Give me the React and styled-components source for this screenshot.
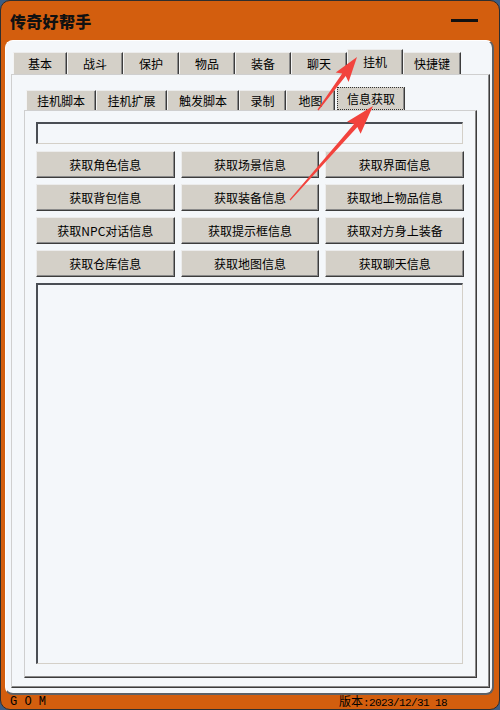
import styled, { createGlobalStyle } from 'styled-components'

const GlobalStyle = createGlobalStyle`
  html, body {
    margin: 0;
    padding: 0;
    background: #3c5e86;
    width: 500px;
    height: 710px;
    overflow: hidden;
  }
  * { box-sizing: border-box; }
`

const Window = styled.div`
  position: relative;
  width: 500px;
  height: 710px;
  background: #d35e0e;
  border: 1px solid #2e2e2e;
  border-radius: 10px;
  display: flex;
  flex-direction: column;
  font-family: "Noto Sans CJK SC", "Liberation Sans", sans-serif;
  color: #000;
`

const TitleBar = styled.div`
  height: 39px;
  flex: none;
  display: flex;
  align-items: center;
  justify-content: space-between;
  padding: 0 21px 0 9px;
`

const Title = styled.div`
  font-size: 16px;
  font-weight: 900;
  color: #111;
  letter-spacing: 0.3px;
`

const Minimize = styled.div`
  width: 27px;
  height: 3px;
  background: #111;
`

const Client = styled.div`
  flex: 1;
  margin: 0 5px 0 4px;
  background: #f4f7fa;
  border-radius: 8px;
  border-top: 1px solid #ffffff;
  border-left: 1px solid #ffffff;
  border-right: 2px solid #5c6066;
  border-bottom: 2px solid #5c6066;
  padding: 8px 2px 5px 5px;
  display: flex;
  flex-direction: column;
`

const TabControl = styled.div`
  flex: 1;
  display: flex;
  flex-direction: column;
`

const TabStrip = styled.div`
  display: flex;
  align-items: flex-end;
  height: ${p => p.$h}px;
  padding-left: 2px;
`

const Tab = styled.div`
  width: ${p => p.$w}px;
  height: ${p => (p.$active ? p.$h + 3 : p.$h)}px;
  margin-left: ${p => p.$ml || 0}px;
  background: #d4d0c8;
  border-top: 1px solid #ececec;
  border-left: 1px solid #f4f4f4;
  border-right: 1px solid #3c3c3c;
  box-shadow: inset -1px 0 #8a8a8a;
  display: flex;
  align-items: center;
  justify-content: center;
  font-size: 12px;
  line-height: 1;
  padding-top: ${p => (p.$active ? 0 : 1)}px;
  ${p => p.$focus && `
    border: 1px dotted #333;
    border-right: 1px solid #3c3c3c;
  `}
`

const TabPanel = styled.div`
  flex: 1;
  display: flex;
  flex-direction: column;
  border-top: 1px solid #cfcfcf;
  border-left: 1px solid #cfcfcf;
  border-right: 1px solid #3c3c3c;
  border-bottom: 1px solid #3c3c3c;
  box-shadow: inset -1px -1px #8a8a8a;
  padding: ${p => p.$pad};
`

const TextBox = styled.div`
  height: 22px;
  flex: none;
  background: #f4f7fa;
  border-top: 2px solid #4a4e54;
  border-left: 2px solid #4a4e54;
  border-right: 1px solid #d4d0c8;
  border-bottom: 1px solid #d4d0c8;
  margin-right: 1px;
`

const ButtonGrid = styled.div`
  display: grid;
  grid-template-columns: repeat(3, 1fr);
  grid-auto-rows: 27px;
  column-gap: 6px;
  row-gap: 6px;
  margin-top: 7px;
`

const Button = styled.div`
  background: #d4d0c8;
  border-top: 1px solid #ececec;
  border-left: 1px solid #ececec;
  border-right: 1px solid #3c3c3c;
  border-bottom: 1px solid #3c3c3c;
  box-shadow: inset -1px -1px #8a8a8a;
  display: flex;
  align-items: center;
  justify-content: center;
  font-size: 12px;
  line-height: 1;
`

const OutputArea = styled.div`
  flex: 1;
  margin-top: 6px;
  margin-right: 1px;
  background: #f4f7fa;
  border-top: 2px solid #4a4e54;
  border-left: 2px solid #4a4e54;
  border-right: 1px solid #d4d0c8;
  border-bottom: 1px solid #d4d0c8;
`

const StatusBar = styled.div`
  height: 14px;
  flex: none;
  display: flex;
  align-items: center;
  justify-content: space-between;
  padding: 0 52px 0 9px;
  line-height: 1;
`

const Gom = styled.span`
  font-family: "Liberation Mono", "DejaVu Sans Mono", monospace;
  font-size: 12px;
  letter-spacing: 0;
`

const Version = styled.span`
  font-family: "Liberation Mono", monospace;
  font-size: 11px;
  letter-spacing: -0.6px;
`

const VersionLabel = styled.span`
  font-family: "Noto Sans CJK SC", sans-serif;
  font-size: 12px;
  letter-spacing: 0;
`

const Overlay = styled.svg`
  position: absolute;
  top: -1px;
  left: -1px;
  pointer-events: none;
`

const mainTabs = [
  ['基本', 54], ['战斗', 56], ['保护', 56], ['物品', 56],
  ['装备', 56], ['聊天', 56], ['挂机', 56, true], ['快捷键', 58],
]

const subTabs = [
  ['挂机脚本', 70], ['挂机扩展', 71], ['触发脚本', 72],
  ['录制', 47], ['地图', 49], ['信息获取', 68, true],
]

const buttons = [
  '获取角色信息', '获取场景信息', '获取界面信息',
  '获取背包信息', '获取装备信息', '获取地上物品信息',
  '获取NPC对话信息', '获取提示框信息', '获取对方身上装备',
  '获取仓库信息', '获取地图信息', '获取聊天信息',
]

// tapered arrow from tail to tip
function arrowPoints(tx, ty, px, py, headLen, headHalf) {
  const dx = px - tx, dy = py - ty
  const len = Math.hypot(dx, dy)
  const ux = dx / len, uy = dy / len
  const nx = -uy, ny = ux
  const bx = px - headLen * ux, by = py - headLen * uy
  const pts = [
    [tx - 0.6 * nx, ty - 0.6 * ny],
    [bx - 2.2 * nx, by - 2.2 * ny],
    [bx - headHalf * nx - 3 * ux, by - headHalf * ny - 3 * uy],
    [px, py],
    [bx + headHalf * nx - 3 * ux, by + headHalf * ny - 3 * uy],
    [bx + 2.2 * nx, by + 2.2 * ny],
    [tx + 0.6 * nx, ty + 0.6 * ny],
  ]
  return pts.map(p => p.map(v => v.toFixed(1)).join(',')).join(' ')
}

export default function App() {
  return (
    <>
      <GlobalStyle />
      <Window>
        <TitleBar>
          <Title>传奇好帮手</Title>
          <Minimize />
        </TitleBar>
        <Client>
          <TabControl>
            <TabStrip $h={25}>
              {mainTabs.map(([t, w, a]) => (
                <Tab key={t} $w={w} $h={22} $active={a}>{t}</Tab>
              ))}
            </TabStrip>
            <TabPanel $pad="12px 12px 9px 12px">
              <TabControl>
                <TabStrip $h={23}>
                  {subTabs.map(([t, w, a]) => (
                    <Tab key={t} $w={w} $h={20} $active={a} $focus={a} $ml={a ? 2 : 0}>{t}</Tab>
                  ))}
                </TabStrip>
                <TabPanel $pad="11px 12px 13px 11px">
                  <TextBox />
                  <ButtonGrid>
                    {buttons.map(b => <Button key={b}>{b}</Button>)}
                  </ButtonGrid>
                  <OutputArea />
                </TabPanel>
              </TabControl>
            </TabPanel>
          </TabControl>
        </Client>
        <StatusBar>
          <Gom>G O M</Gom>
          <Version><VersionLabel>版本</VersionLabel>:2023/12/31 18</Version>
        </StatusBar>
        <Overlay width="500" height="710" viewBox="0 0 500 710">
          <polygon points={arrowPoints(318, 110, 357, 57, 22, 8)} fill="#f2433d" />
          <polygon points={arrowPoints(290, 200, 373, 106, 26, 9)} fill="#f2433d" />
        </Overlay>
      </Window>
    </>
  )
}
